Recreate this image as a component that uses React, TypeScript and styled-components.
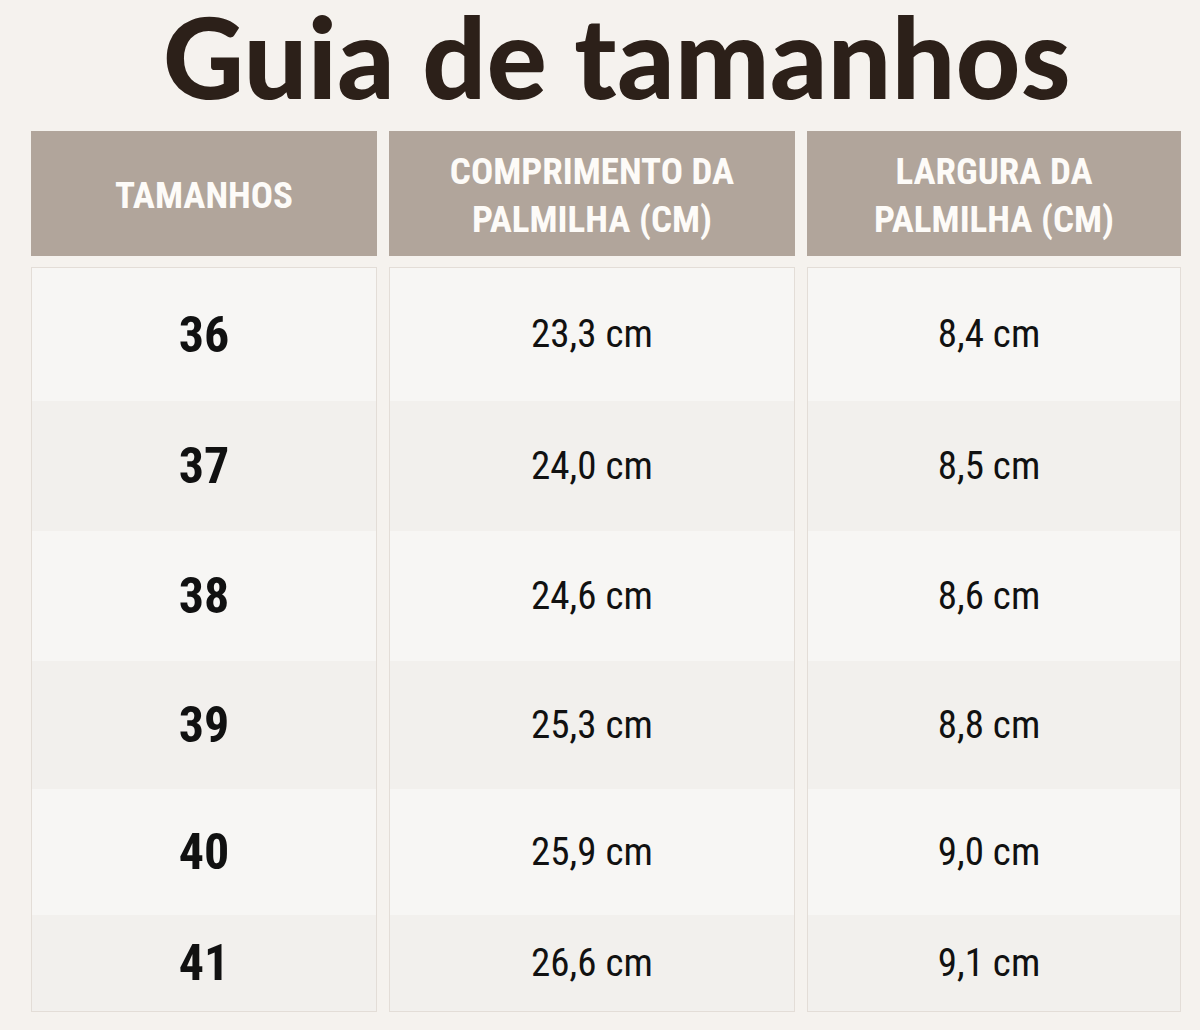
import React from "react";
import styled, { createGlobalStyle } from "styled-components";

const GlobalStyle = createGlobalStyle`
  html, body {
    margin: 0;
    padding: 0;
    background: #f5f2ee;
  }
  body {
    font-family: "Lato", "Liberation Sans", sans-serif;
  }
`;

const Page = styled.main`
  width: 1200px;
  height: 1030px;
  box-sizing: border-box;
  overflow: hidden;
  background: #f5f2ee;
  display: flex;
  flex-direction: column;
  gap: 19px;
`;

const Title = styled.h1`
  margin: 0;
  padding-left: 34px;
  text-align: center;
  font-family: "Lato", "Liberation Sans", sans-serif;
  font-weight: 900;
  font-size: 112px;
  line-height: 112px;
  color: #2c2019;
  letter-spacing: 0.5px;
`;

const Table = styled.div`
  display: grid;
  grid-template-columns: 346px 406px 374px;
  column-gap: 12px;
  padding-left: 31px;
`;

const Column = styled.section`
  display: flex;
  flex-direction: column;
  gap: 11px;
`;

const HeaderCell = styled.div`
  height: 125px;
  background: #b1a59b;
  display: flex;
  align-items: center;
  justify-content: center;
  padding-top: 4px;
  box-sizing: border-box;
  text-align: center;
  color: #fdfbf8;
  font-family: "Roboto Condensed", "Noto Sans", "DejaVu Sans", sans-serif;
  font-stretch: condensed;
  font-weight: 700;
  font-size: 37px;
  line-height: 48px;
  text-transform: uppercase;
`;

const BodyBox = styled.div`
  border: 1px solid #e3ddd7;
  display: flex;
  flex-direction: column;
`;

const Cell = styled.div<{ $h: number; $alt: boolean; $strong?: boolean; $shift?: number }>`
  height: ${(p) => p.$h}px;
  background: ${(p) => (p.$alt ? "#f2f0ed" : "#f7f6f4")};
  display: flex;
  align-items: center;
  justify-content: center;
  padding-right: ${(p) => p.$shift ?? 0}px;
  color: #111;
  font-family: "Roboto Condensed", "Noto Sans", "DejaVu Sans", sans-serif;
  font-stretch: condensed;
  font-weight: ${(p) => (p.$strong ? 700 : 400)};
  font-size: ${(p) => (p.$strong ? "50px" : "39px")};
  line-height: 1;
`;

const heights = [133, 130, 130, 128, 126, 96];

const columns: { head: React.ReactNode; values: string[]; strong?: boolean; shift?: number }[] = [
  { head: "Tamanhos", values: ["36", "37", "38", "39", "40", "41"], strong: true },
  {
    head: (
      <>
        Comprimento da
        <br />
        palmilha (cm)
      </>
    ),
    values: ["23,3 cm", "24,0 cm", "24,6 cm", "25,3 cm", "25,9 cm", "26,6 cm"],
  },
  {
    head: (
      <>
        Largura da
        <br />
        palmilha (cm)
      </>
    ),
    values: ["8,4 cm", "8,5 cm", "8,6 cm", "8,8 cm", "9,0 cm", "9,1 cm"],
    shift: 10,
  },
];

export default function App() {
  return (
    <>
      <GlobalStyle />
      <Page>
        <Title>Guia de tamanhos</Title>
        <Table>
          {columns.map((col, ci) => (
            <Column key={ci}>
              <HeaderCell>
                <span>{col.head}</span>
              </HeaderCell>
              <BodyBox>
                {col.values.map((v, ri) => (
                  <Cell
                    key={ri}
                    $h={heights[ri]}
                    $alt={ri % 2 === 1}
                    $strong={col.strong}
                    $shift={col.shift}
                  >
                    {v}
                  </Cell>
                ))}
              </BodyBox>
            </Column>
          ))}
        </Table>
      </Page>
    </>
  );
}
